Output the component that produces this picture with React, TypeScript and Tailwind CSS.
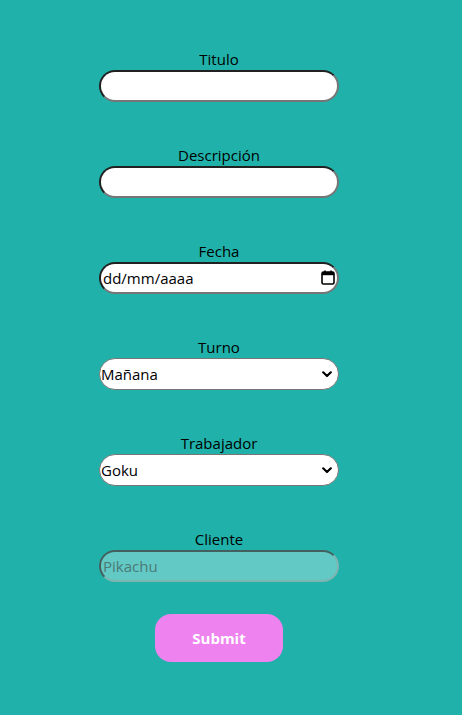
import React from "react";

const font = { fontFamily: '"Open Sans", "Noto Sans", sans-serif' };

function Chevron() {
  return (
    <svg width="10" height="7" viewBox="0 0 10 7" className="pointer-events-none absolute right-[7px] top-[13px]">
      <path d="M1.2 1.3 L5 5 L8.8 1.3" fill="none" stroke="#000" strokeWidth="2.2" strokeLinecap="round" strokeLinejoin="round" />
    </svg>
  );
}

function Calendar() {
  return (
    <svg width="14" height="15" viewBox="0 0 14 15" className="pointer-events-none absolute right-[4px] top-[8px]">
      <rect x="1" y="2" width="12" height="12" rx="1.5" fill="none" stroke="#000" strokeWidth="1.6" />
      <rect x="1" y="2" width="12" height="3.2" fill="#000" />
      <rect x="3.2" y="0.5" width="1.6" height="2.5" fill="#000" />
      <rect x="9.2" y="0.5" width="1.6" height="2.5" fill="#000" />
    </svg>
  );
}

const textInput =
  "w-[240px] h-[32px] rounded-full bg-white border-2 border-[#767676] [border-style:inset] px-[2px] text-[15px] text-black outline-none";
const selectBox =
  "w-[240px] h-[32px] appearance-none rounded-full bg-white border border-[#767676] pl-[1px] pr-5 text-[15px] text-black outline-none";
const labelCls = "text-[15px] leading-[21px] text-black";

export default function App() {
  return (
    <div className="min-h-[715px] w-full bg-[#20B2AA]" style={font}>
      <form className="flex flex-col gap-[43px] pl-[99px] pt-[49px]">
        <div className="flex w-[240px] flex-col items-center">
          <label className={labelCls}>Titulo</label>
          <input type="text" className={textInput} />
        </div>
        <div className="flex w-[240px] flex-col items-center">
          <label className={labelCls}>Descripción</label>
          <input type="text" className={textInput} />
        </div>
        <div className="flex w-[240px] flex-col items-center">
          <label className={labelCls}>Fecha</label>
          <div className="relative">
            <input type="text" readOnly value="dd/mm/aaaa" className={textInput} />
            <Calendar />
          </div>
        </div>
        <div className="flex w-[240px] flex-col items-center">
          <label className={labelCls}>Turno</label>
          <div className="relative">
            <select className={selectBox} defaultValue="Mañana">
              <option>Mañana</option>
              <option>Tarde</option>
              <option>Noche</option>
            </select>
            <Chevron />
          </div>
        </div>
        <div className="flex w-[240px] flex-col items-center">
          <label className={labelCls}>Trabajador</label>
          <div className="relative">
            <select className={selectBox} defaultValue="Goku">
              <option>Goku</option>
              <option>Vegeta</option>
            </select>
            <Chevron />
          </div>
        </div>
        <div className="flex w-[240px] flex-col items-center">
          <label className={labelCls}>Cliente</label>
          <input
            type="text"
            disabled
            placeholder="Pikachu"
            className="w-[240px] h-[32px] rounded-full bg-[#63c9c4] border-2 border-[#7fb4b1] [border-style:inset] px-[2px] text-[15px] text-[#4f6f6d] placeholder:text-[#4a7a77] outline-none"
          />
        </div>
        <div className="flex w-[240px] justify-center -mt-[11px]">
          <button
            type="button"
            className="h-[48px] w-[128px] rounded-[16px] bg-[#EE82EE] text-[15px] font-bold text-white"
          >
            Submit
          </button>
        </div>
      </form>
    </div>
  );
}
